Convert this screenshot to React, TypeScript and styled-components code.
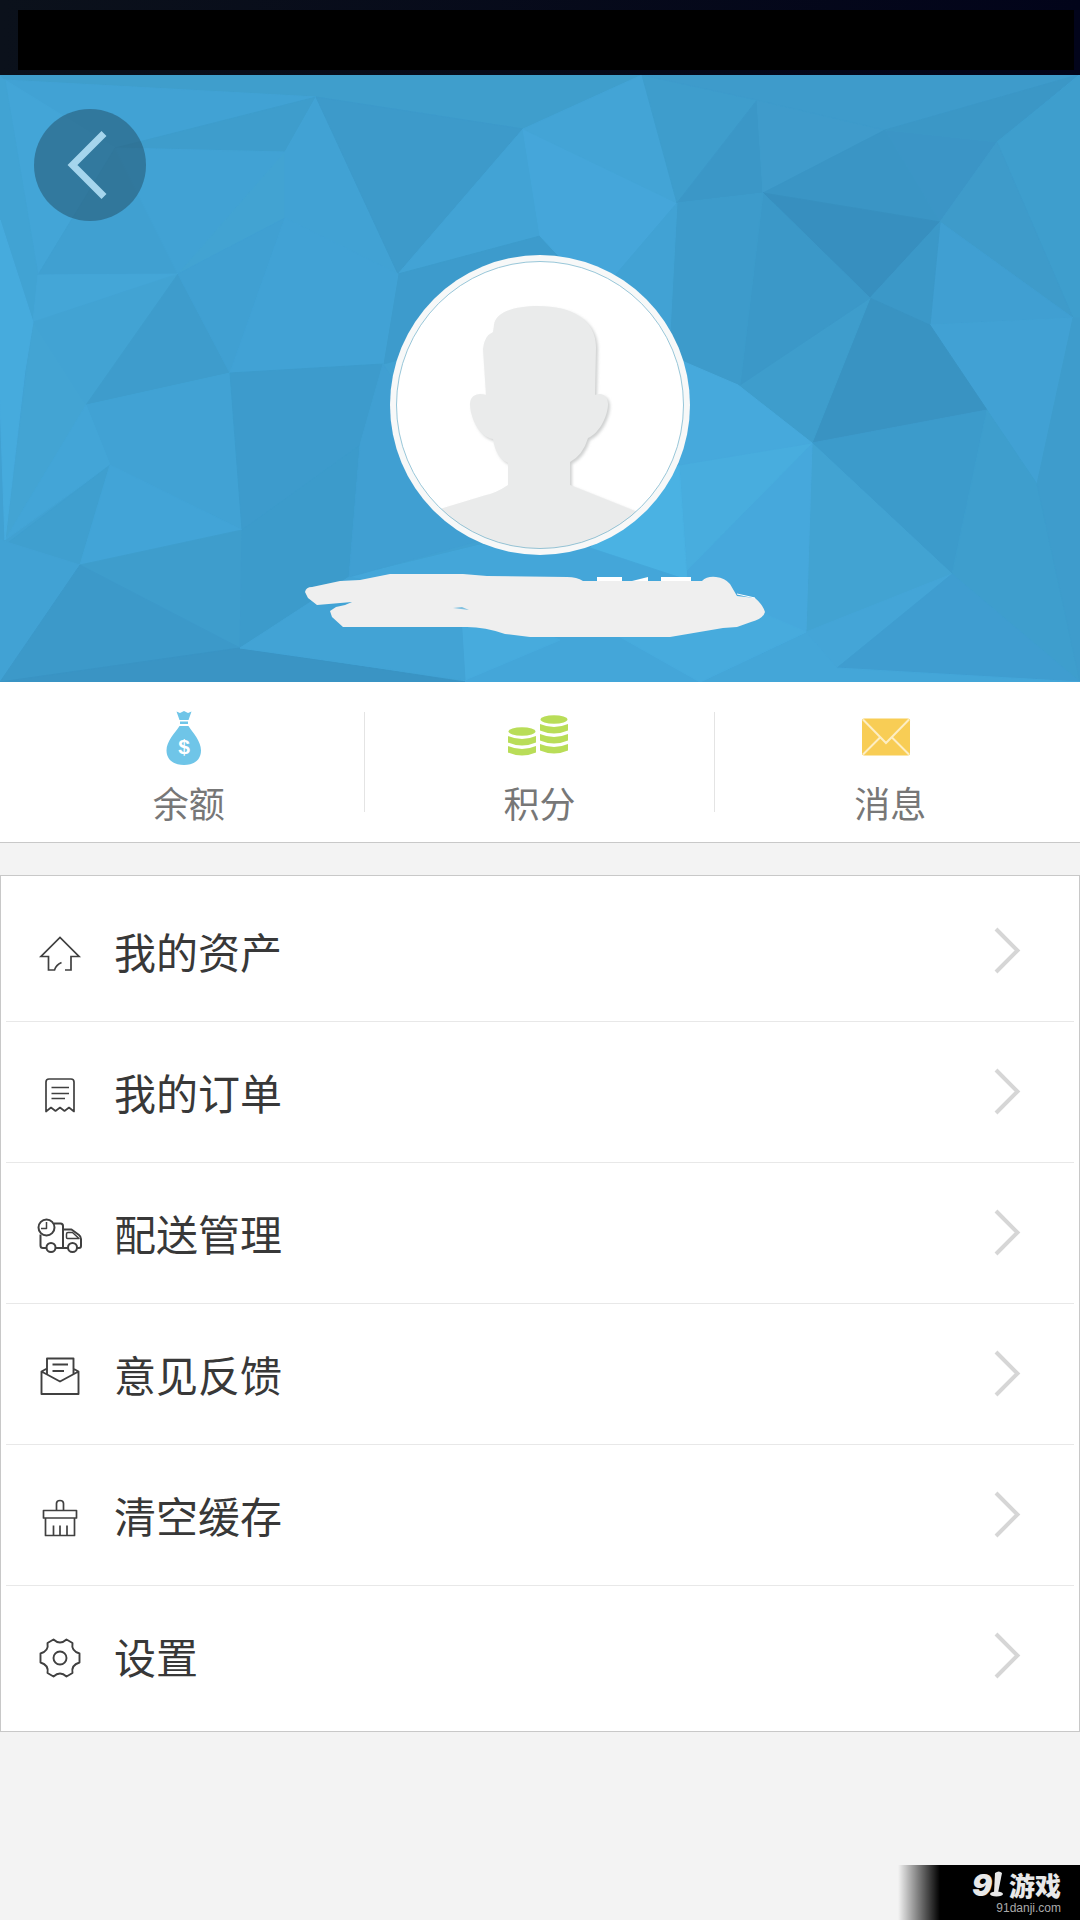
import React from 'react';
import styled, { createGlobalStyle } from 'styled-components';

const GlobalStyle = createGlobalStyle`
  *, *::before, *::after { box-sizing: border-box; }
  body {
    margin: 0;
    background: #f3f3f3;
    font-family: "Noto Sans CJK SC", sans-serif;
  }
`;

const Page = styled.div`
  display: flex;
  flex-direction: column;
  min-height: 100vh;
`;

const StatusBar = styled.div`
  height: 75px;
  padding: 10px 6px 5px 18px;
  background: linear-gradient(90deg, #0b111b, #02041a);
`;

const StatusFill = styled.div`
  height: 100%;
  background: #000;
`;

const Hero = styled.header`
  position: relative;
  display: flex;
  flex-direction: column;
  align-items: center;
  padding: 34px 34px 44px;
  background: #41a1d2;
  overflow: hidden;
`;

const HeroBackdrop = styled.svg`
  position: absolute;
  inset: 0;
  width: 100%;
  height: 100%;
`;

const BackButton = styled.button`
  position: relative;
  align-self: flex-start;
  display: block;
  width: 112px;
  height: 112px;
  padding: 0;
  border: 0;
  border-radius: 50%;
  background: rgba(34, 77, 102, 0.5);
  cursor: pointer;
`;

const Avatar = styled.svg`
  position: relative;
  display: block;
  width: 300px;
  height: 300px;
  margin-top: 34px;
`;

const NameCover = styled.svg`
  position: relative;
  display: block;
  width: 470px;
  height: 65px;
  margin-top: 18px;
`;

const Stats = styled.nav`
  display: grid;
  grid-template-columns: 1fr 1px 1fr 1px 1fr;
  padding: 26px 15px 16px 14px;
  border-bottom: 1px solid #c8c8c8;
  background: #fff;
`;

const Stat = styled.a`
  display: flex;
  flex-direction: column;
  align-items: center;
  gap: 10px;
  color: #777;
  font-size: 36px;
  line-height: 48px;
  text-decoration: none;
`;

const StatIcon = styled.svg`
  display: block;
  width: 70px;
  height: 60px;
`;

const StatDivider = styled.span`
  height: 100px;
  margin-top: 4px;
  background: #e4e4e4;
`;

const Menu = styled.nav`
  margin-top: 32px;
  padding: 5px 5px 4px;
  border: 1px solid #c8c8c8;
  background: #fff;
`;

const MenuRow = styled.a`
  display: flex;
  align-items: center;
  height: 141px;
  padding: 0 52px 0 30px;
  border-bottom: 1px solid #e8e8e8;
  color: #383838;
  font-size: 42px;
  line-height: 60px;
  text-decoration: none;

  &:last-child {
    border-bottom-color: transparent;
  }
`;

const MenuIcon = styled.svg`
  flex: none;
  width: 48px;
  height: 48px;
  margin-right: 30px;
  fill: none;
  stroke: #404040;
  stroke-width: 1.7;
  stroke-linejoin: round;
`;

const MenuLabel = styled.span`
  flex: 1;
`;

const Chevron = styled.svg`
  flex: none;
  width: 28px;
  height: 48px;
  fill: none;
  stroke: #d6d6d6;
  stroke-width: 4;
`;

const Watermark = styled.footer`
  display: flex;
  flex-direction: column;
  align-items: flex-end;
  align-self: flex-end;
  width: 182px;
  height: 55px;
  margin-top: auto;
  padding: 4px 19px 0 0;
  background: linear-gradient(90deg, transparent, #000 42px);
`;

const WatermarkBrand = styled.div`
  display: flex;
  align-items: center;
  gap: 4px;
  color: #e8e8e8;
  font-size: 26px;
  font-weight: 900;
  line-height: 32px;
`;

const WatermarkLogo = styled.svg`
  width: 36px;
  height: 30px;
  fill: #e8e8e8;
  overflow: visible;
`;

const WatermarkSite = styled.div`
  color: #aaa;
  font-family: "Liberation Sans", Arial, sans-serif;
  font-size: 12px;
  line-height: 14px;
`;

// Facets of the low-poly backdrop, in a 1080 x 607 field whose top is y = 75.
const facets: [string, string][] = [
  ['#3f9ecc', '0,75 642,75 523,129 316,97 5,80'],
  ['#42a3d5', '5,80 316,97 115,148'],
  ['#3e9dcc', '316,97 285,152 115,148'],
  ['#44a6d8', '5,80 115,148 38,275'],
  ['#42a4d4', '0,80 5,80 38,275 33,322 0,240'],
  ['#40a0d1', '115,148 38,275 178,274'],
  ['#42a3d5', '115,148 285,152 178,274'],
  ['#43a4d3', '285,152 285,218 178,274'],
  ['#42a3d5', '316,97 398,274 285,218 285,152'],
  ['#3d99c9', '316,97 523,129 398,274'],
  ['#43a4d6', '523,129 540,236 398,274'],
  ['#3d9bcb', '398,274 540,236 640,300 383,364'],
  ['#46a8dc', '523,129 677,203 600,300 540,236'],
  ['#44a5d7', '642,75 523,129 677,203'],
  ['#3e9dcc', '642,75 677,203 757,100'],
  ['#3b96c6', '757,100 677,203 763,193'],
  ['#3f9bca', '757,100 763,193 885,130'],
  ['#3e9aca', '642,75 1078,75 885,130 757,100'],
  ['#3993c3', '763,193 885,130 940,222'],
  ['#3a94c4', '885,130 997,142 940,222'],
  ['#3b96c5', '885,130 1078,75 997,142'],
  ['#368dbc', '763,193 940,222 870,298'],
  ['#3e9ecd', '1080,75 997,142 1073,318 1080,318'],
  ['#3e9ac9', '997,142 940,222 1073,318'],
  ['#409fd2', '940,222 930,325 1073,318'],
  ['#3b97c7', '940,222 870,298 930,325'],
  ['#42a2d5', '930,325 1073,318 1037,484'],
  ['#3891c0', '870,298 930,325 987,410 812,443'],
  ['#3e9dcb', '870,298 812,443 738,385'],
  ['#3b97c7', '763,193 870,298 740,385'],
  ['#3d9bca', '677,203 763,193 740,385 668,365'],
  ['#42a3d5', '677,203 560,340 668,370'],
  ['#3c9aca', '812,443 987,410 952,574'],
  ['#3e9ecd', '987,410 1037,484 1080,682 952,574'],
  ['#3e9ccb', '1073,318 1080,318 1080,682 1037,484'],
  ['#43a4d3', '812,443 952,574 806,632'],
  ['#45a6d8', '952,574 806,632 837,668'],
  ['#3f9dd0', '952,574 837,668 1080,682'],
  ['#45a7da', '806,632 837,668 1080,682 700,682'],
  ['#48aade', '812,443 806,632 700,682 687,570'],
  ['#4ab0e1', '812,443 679,465 687,570'],
  ['#48abde', '668,355 738,385 812,443 679,465'],
  ['#4cb5e6', '679,465 687,580 590,548'],
  ['#45a8db', '349,577 480,545 590,548 687,580 700,682 465,682'],
  ['#49ade0', '590,620 687,580 806,632 700,682'],
  ['#49ade0', '460,600 560,640 465,680'],
  ['#45a7d9', '38,275 178,274 33,322'],
  ['#43a4d4', '178,274 33,322 25,370 86,405'],
  ['#3e9ccb', '178,274 230,373 86,405'],
  ['#40a0d3', '285,218 230,373 178,274'],
  ['#42a3d6', '285,218 398,274 383,364 230,373'],
  ['#41a3d5', '230,373 86,405 110,465 242,530'],
  ['#3d9bcc', '230,373 383,364 360,445 242,530'],
  ['#44a5d4', '33,322 86,405 5,540'],
  ['#44a6d8', '86,405 5,540 110,465'],
  ['#3f9fcf', '110,465 5,545 80,565'],
  ['#43a5d8', '110,465 242,530 80,565'],
  ['#42a3d5', '0,540 80,565 0,682'],
  ['#3e9dcc', '80,565 242,530 240,648'],
  ['#3c98c8', '80,565 240,648 0,682'],
  ['#3992c2', '0,682 240,648 465,682'],
  ['#3c9aca', '242,530 360,445 349,577 240,648'],
  ['#409fd2', '360,445 349,577 500,535 383,364'],
  ['#43a4d6', '240,648 349,577 460,600 465,680'],
  ['#48ade0', '0,220 33,322 25,370 5,540 0,400'],
];

const menuItems: { label: string; icon: React.ReactNode }[] = [
  {
    label: '我的资产',
    icon: (
      <path
        strokeLinejoin="miter"
        d="M29 43h6V29.500h8L24 10.500 5 29.500h7.500V43h6q1.500-5 7-7.500"
      />
    ),
  },
  {
    label: '我的订单',
    icon: (
      <path d="M10 43.500V14q0-3 3-3h22q3 0 3 3v29.500l-5-4-4.500 3.500-4.500-3.500-4.500 3.500-4.500-3.500zM15.500 19.500H33M15.500 25.500H33M15.500 30.500H29" />
    ),
  },
  {
    label: '配送管理',
    icon: (
      <g strokeWidth="2">
        <circle cx="10.500" cy="18.500" r="8" />
        <path strokeWidth="1.500" d="M10.500 13v6.500H5" />
        <path d="M18 14.500h6.500q2.500 0 2.500 2.500v22M4.500 25.500v11q0 2.500 2.500 2.500h3.500M19.500 39H32M27 20.500h8.500l7.500 5.500q2 1.500 2 4v7q0 2-2 2h-2" />
        <path strokeWidth="1.500" d="M32 23.500h4.500l6.500 6H31.500q-1 0-1-1v-3.500q0-1.500 1.500-1.500z" />
        <circle cx="15" cy="38.500" r="4.500" />
        <circle cx="36.500" cy="38.500" r="4.500" />
      </g>
    ),
  },
  {
    label: '意见反馈',
    icon: (
      <g strokeWidth="1.900">
        <path d="M11 18.500l-5.500 3V44h37V21.500l-5.500-3M5.500 21.500L24 31.500l18.500-10M11 24.500v-16h26.500v16" />
        <path d="M16.500 14.500H32M16.500 21H28" />
      </g>
    ),
  },
  {
    label: '清空缓存',
    icon: (
      <path d="M20.500 19.500v-7q0-3 3.500-3t3.500 3v7M7.500 19.500h33v7.500h-33zM9.500 27v17.500h29V27M17.500 34.500v10M24 34.500v10M31 34.500v10" />
    ),
  },
  {
    label: '设置',
    icon: (
      <g strokeWidth="1.900">
        <path d="M17.500 7.500q6.500 6 13 0l6 3.500q-1.500 8 7 10.500v9q-8.500 2.500-7 10.500l-6 3.500q-6.500-6-13 0l-6-3.500q1.500-8-7-10.500v-9q8.500-2.500 7-10.500z" />
        <circle cx="24" cy="26" r="6.500" />
      </g>
    ),
  },
];

const silhouette =
  'M148 51C122 51 105 58 104 70L103 77Q94 81 93 94L96 140C88 137 80 140 80 149C80 160 88 182 103 184Q106 203 118 208V230Q106 238 96 240L40 257V300H260V262L180 230V207Q193 200 198 183C210 178 218 160 218 149C218 141 212 137 205 140L206 92C206 65 182 51 148 51Z';

export default function App() {
  return (
    <Page>
      <GlobalStyle />
      <StatusBar>
        <StatusFill />
      </StatusBar>

      <Hero>
        <HeroBackdrop viewBox="0 75 1080 607" preserveAspectRatio="none" aria-hidden="true">
          <g opacity="0.850">
            {facets.map(([color, points]) => (
              <polygon key={points} points={points} fill={color} stroke={color} strokeWidth="1" />
            ))}
          </g>
        </HeroBackdrop>
        <BackButton type="button" aria-label="返回">
          <svg width="112" height="112" viewBox="0 0 112 112" fill="none" stroke="#a5d5ed" strokeWidth="7">
            <path d="M70 24.500L38.500 56L70 87.500" />
          </svg>
        </BackButton>
        <Avatar viewBox="0 0 300 300" role="img" aria-label="头像">
          <defs>
            <clipPath id="face">
              <circle cx="150" cy="150" r="143.500" />
            </clipPath>
            <filter id="soft">
              <feGaussianBlur stdDeviation="1.500" />
            </filter>
          </defs>
          <circle cx="150" cy="150" r="150" fill="#f7f8f8" />
          <circle cx="150" cy="150" r="143.500" fill="#fff" />
          <g clipPath="url(#face)">
            <path d={silhouette} fill="#cfd0d0" transform="translate(2 2)" filter="url(#soft)" />
            <path d={silhouette} fill="#eaebeb" />
          </g>
          <circle cx="150" cy="150" r="143.500" fill="none" stroke="#7fb9cf" strokeWidth="0.800" />
        </Avatar>
        <NameCover viewBox="0 0 470 65" aria-hidden="true">
          <path
            fill="#efefef"
            d="M0 19Q1 14 7 14L35 8L55 7L85 1L158 1L182 3L262 4Q272 4 278 8H397Q402 3 411 4T425 11L432 23L450 25Q458 32 460 39Q458 46 446 49L432 54L418 55L365 64H225L200 61Q180 54 162 54H38L27 44L25 38L31 34L40 32L47 29L12 32L3 25Z"
          />
          <path fill="#fff" d="M292 4h25v4h-25zM327 8l16-4v4zM356 4h30v4h-30z" />
          <path fill="none" stroke="#fff" d="M432 21l18 4" />
          <path fill="#7fc0e0" d="M148 35l9-1 7 3z" />
        </NameCover>
      </Hero>

      <Stats>
        <Stat href="#balance">
          <StatIcon viewBox="0 0 70 60" aria-hidden="true">
            <path
              fill="#6fc5e8"
              d="M22.500 3.500l3.500 1.500 4-2 4 2 3.500-1.500-3 8.500h-9zM26 13.500h8v2.500h-8zM25.500 18h9C39 25 47 33 47 42.500C47 52 40 57 30 57S12.500 52 12.500 42.500C12.500 33 21 25 25.500 18z"
            />
            <text x="30" y="46" textAnchor="middle" fill="#fff" fontFamily="Liberation Sans, Arial, sans-serif" fontWeight="700" fontSize="21">
              $
            </text>
          </StatIcon>
          余额
        </Stat>
        <StatDivider />
        <Stat href="#points">
          <StatIcon viewBox="0 0 70 60" fill="#b9dd58" aria-hidden="true">
            <ellipse cx="18" cy="23.500" rx="13.500" ry="4.200" />
            <path d="M4 28q14 6 28 0v6.500q-14 6-28 0zM4 38q14 6 28 0v6.500q-14 6-28 0z" />
            <ellipse cx="50" cy="11.500" rx="13.500" ry="4.200" />
            <path d="M36 16q14 6 28 0v6.500q-14 6-28 0zM36 26q14 6 28 0v6.500q-14 6-28 0zM36 36q14 6 28 0v6.500q-14 6-28 0z" />
          </StatIcon>
          积分
        </Stat>
        <StatDivider />
        <Stat href="#messages">
          <StatIcon viewBox="0 0 70 60" aria-hidden="true">
            <rect x="7" y="10.500" width="48" height="37" rx="2" fill="#f8cd55" />
            <path d="M8 11.500L31 35L54 11.500M8 46.500L25 29.500M54 46.500L37 29.500" fill="none" stroke="#fdeec4" strokeWidth="2" />
          </StatIcon>
          消息
        </Stat>
      </Stats>

      <Menu>
        {menuItems.map((item) => (
          <MenuRow key={item.label} href="#">
            <MenuIcon viewBox="0 0 48 48" aria-hidden="true">
              {item.icon}
            </MenuIcon>
            <MenuLabel>{item.label}</MenuLabel>
            <Chevron viewBox="0 0 28 48" aria-hidden="true">
              <path d="M2 2L23.500 23.500L2 45" />
            </Chevron>
          </MenuRow>
        ))}
      </Menu>

      <Watermark>
        <WatermarkBrand>
          <WatermarkLogo viewBox="0 0 36 30" role="img" aria-label="91">
            <text x="3" y="26" fontFamily="Inter, Liberation Sans, sans-serif" fontWeight="900" fontStyle="italic" fontSize="30">
              9
            </text>
            <path d="M26 3q4-3 7 0L29 23h-4z" />
            <ellipse cx="27.500" cy="24" rx="6.500" ry="2.500" />
          </WatermarkLogo>
          游戏
        </WatermarkBrand>
        <WatermarkSite>91danji.com</WatermarkSite>
      </Watermark>
    </Page>
  );
}
